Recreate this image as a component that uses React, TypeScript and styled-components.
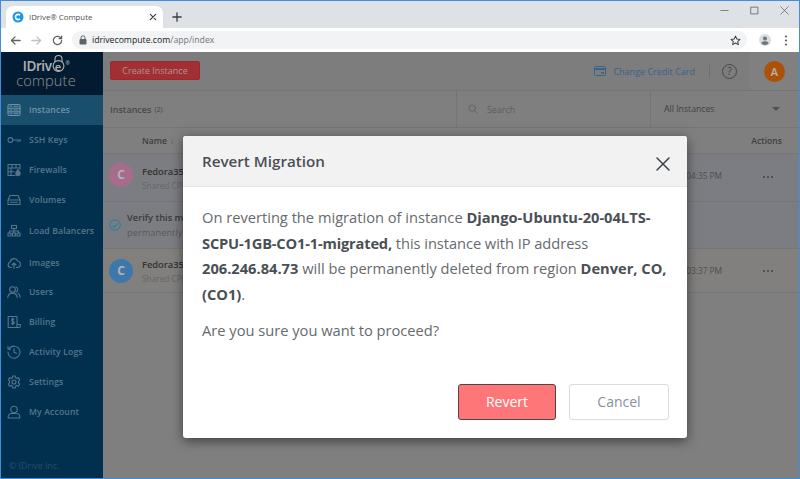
import React from "react";
import styled, { createGlobalStyle } from "styled-components";

const Global = createGlobalStyle`
  html, body { margin: 0; padding: 0; height: 100%; overflow: hidden; }
  #root { height: 100%; }
  * { box-sizing: border-box; }
  body { font-family: "Open Sans", "Noto Sans", sans-serif; }
`;

const Window = styled.div`
  position: relative;
  width: 800px;
  height: 479px;
  display: flex;
  flex-direction: column;
  border: 1px solid #3f8fdb;
  background: #fff;
  overflow: hidden;
`;

const TabStrip = styled.div`
  height: 27px;
  flex: none;
  background: #dee1e6;
  display: flex;
  align-items: flex-end;
  padding-left: 5px;
`;

const Tab = styled.div`
  width: 157px;
  height: 22px;
  background: #fff;
  border-radius: 7px 7px 0 0;
  display: flex;
  align-items: center;
  padding: 0 6px 0 6px;
  gap: 5px;
`;

const TabTitle = styled.span`
  flex: 1;
  font: 400 7.8px "Open Sans", sans-serif;
  color: #4a4d51;
`;

const NewTab = styled.div`
  width: 18px;
  height: 18px;
  margin: 0 0 2px 5px;
  display: flex;
  align-items: center;
  justify-content: center;
`;

const WindowControls = styled.div`
  margin-left: auto;
  height: 100%;
  display: flex;
  align-items: center;
  gap: 21px;
  padding: 0 10px 8px 0;
`;

const Toolbar = styled.div`
  height: 24px;
  flex: none;
  background: #fff;
  display: flex;
  align-items: center;
  padding: 0 11px 0 9px;
`;

const NavIcons = styled.div`
  display: flex;
  align-items: center;
  gap: 10px;
  width: 62px;
`;

const UrlBar = styled.div`
  flex: 1 1 auto;
  height: 18px;
  background: #f1f3f4;
  border-radius: 9px;
  display: flex;
  align-items: center;
  padding: 0 6px 0 7px;
  gap: 5px;
  font: 400 8.7px "Open Sans", sans-serif;
  color: #202124;
`;

const UrlPath = styled.span`
  color: #70757a;
`;

const UrlStar = styled.span`
  margin-left: auto;
  display: flex;
`;

const ToolRight = styled.div`
  display: flex;
  align-items: center;
  gap: 13px;
  padding-left: 12px;
`;

const AppArea = styled.div`
  flex: 1;
  display: flex;
  min-height: 0;
`;

const Sidebar = styled.aside`
  width: 102px;
  flex: none;
  background: #024571;
  display: flex;
  flex-direction: column;
`;

const LogoBox = styled.div`
  height: 43px;
  flex: none;
  background: #032845;
  display: flex;
  flex-direction: column;
  align-items: center;
  color: #ffffff;
  padding: 7px 12px 0 0;
`;

const LogoTop = styled.div`
  display: flex;
  align-items: flex-start;
  font: 600 13.5px/15px "Open Sans", sans-serif;
  letter-spacing: -0.4px;
`;

const LogoReg = styled.span`
  font-size: 5px;
  line-height: 8px;
  margin-left: 1px;
`;

const LogoLock = styled.span`
  position: relative;
  display: inline-block;
  width: 13px;
  text-align: center;
  font-size: 11px;
  letter-spacing: 0;
`;

const LockArc = styled.svg`
  position: absolute;
  left: 0;
  top: -5px;
`;

const LogoBottom = styled.div`
  font: 300 14.5px/14px "Open Sans", sans-serif;
  letter-spacing: 0.2px;
  color: #c8d0d6;
`;

const Nav = styled.nav`
  display: flex;
  flex-direction: column;
  flex: 1;
`;

const NavItem = styled.div<{ $active?: boolean; $shift?: number }>`
  height: 30px;
  flex: none;
  margin-top: ${(p) => p.$shift ?? 0}px;
  display: flex;
  align-items: center;
  gap: 8px;
  padding-left: 6px;
  background: ${(p) => (p.$active ? "#25719d" : "transparent")};
  color: ${(p) => (p.$active ? "#9cd0ee" : "#79a8c8")};
  font: 600 8.7px "Open Sans", sans-serif;
  letter-spacing: 0.1px;
  white-space: nowrap;
`;

const NavGlyph = styled.svg`
  width: 14px;
  height: 14px;
  flex: none;
  fill: none;
  stroke: currentColor;
  stroke-width: 1.1;
  stroke-linecap: round;
  stroke-linejoin: round;
`;

const Copyright = styled.div`
  margin-top: auto;
  padding: 0 0 6px 8px;
  color: #3a6f98;
  font: 400 8.8px "Open Sans", sans-serif;
`;

const Main = styled.main`
  flex: 1;
  min-width: 0;
  display: flex;
  flex-direction: column;
  background: #b7b7b7;
`;

const TopBar = styled.div`
  height: 39px;
  flex: none;
  display: flex;
  align-items: center;
  padding-left: 7px;
  background: #b3b3b3;
  border-bottom: 1px solid #a8a8a8;
`;

const CreateButton = styled.div`
  width: 90px;
  height: 19px;
  margin-bottom: 1px;
  background: #e84449;
  border: 1px solid #dc3d42;
  border-radius: 2px;
  color: #ffcfcf;
  font: 400 9px/17px "Open Sans", sans-serif;
  text-align: center;
`;

const CardLink = styled.div`
  margin-left: auto;
  display: flex;
  align-items: center;
  gap: 7px;
  color: #4f8fc8;
  font: 400 9px "Open Sans", sans-serif;
`;

const Divider = styled.div`
  width: 1px;
  height: 13px;
  margin: 0 12px 0 14px;
  background: #a0a0a0;
`;

const HelpIcon = styled.div`
  width: 15px;
  height: 15px;
  margin-right: 13px;
  border: 1px solid #656565;
  border-radius: 50%;
  color: #656565;
  font: 400 10.5px/13px "Open Sans", sans-serif;
  text-align: center;
`;

const AvatarBox = styled.div`
  width: 49px;
  height: 100%;
  display: flex;
  align-items: center;
  justify-content: center;
  background: #b8b8b8;
`;

const Avatar = styled.div`
  width: 21px;
  height: 21px;
  border-radius: 50%;
  background: #f7750b;
  color: #fff;
  font: 600 11px/21px "Open Sans", sans-serif;
  text-align: center;
`;

const FilterBar = styled.div`
  height: 37px;
  flex: none;
  display: flex;
  align-items: stretch;
  border-bottom: 1px solid #a8a8a8;
`;

const FilterTitle = styled.div`
  width: 353px;
  padding-left: 7px;
  display: flex;
  align-items: center;
  gap: 3px;
  color: #676767;
  font: 600 9px "Open Sans", sans-serif;
`;

const FilterCount = styled.span`
  font-weight: 400;
  font-size: 7px;
`;

const SearchBox = styled.div`
  width: 195px;
  display: flex;
  align-items: center;
  gap: 9px;
  padding-left: 11px;
  border-left: 1px solid #a8a8a8;
  border-right: 1px solid #a8a8a8;
  color: #868686;
  font: 400 8.9px "Open Sans", sans-serif;
`;

const Select = styled.div`
  flex: 1;
  display: flex;
  align-items: center;
  justify-content: space-between;
  padding: 0 19px 0 13px;
  color: #5c5c5c;
  font: 400 8.7px "Open Sans", sans-serif;
`;

const Caret = styled.span`
  width: 0;
  height: 0;
  border: 4px solid transparent;
  border-top: 4px solid #717171;
  border-bottom: 0;
`;

const TableHead = styled.div`
  height: 26px;
  flex: none;
  display: flex;
  align-items: center;
  justify-content: space-between;
  padding: 0 17px 0 39px;
  border-bottom: 1px solid #a8a8a8;
  color: #5a5a5a;
  font: 600 8.6px "Open Sans", sans-serif;
`;

const SortMark = styled.span`
  font-weight: 400;
  color: #868686;
  margin-left: 3px;
`;

const Row = styled.div<{ $h: number; $tint?: boolean }>`
  height: ${(p) => p.$h}px;
  flex: none;
  display: flex;
  align-items: center;
  padding: 0 25px 0 6px;
  background: ${(p) => (p.$tint ? "#b1b4ba" : "#b9b8b6")};
  border-bottom: 1px solid #a8a8a8;
`;

const RowAvatar = styled.div<{ $color: string; $lift?: boolean }>`
  width: 24px;
  height: 24px;
  flex: none;
  margin-bottom: ${(p) => (p.$lift ? 6 : 0)}px;
  border-radius: 50%;
  background: ${(p) => p.$color};
  color: #fff;
  font: 700 12px/24px "Open Sans", sans-serif;
  text-align: center;
`;

const RowText = styled.div`
  margin-left: 9px;
  padding-top: 1px;
  flex: 1;
  min-width: 0;
  white-space: nowrap;
`;

const RowName = styled.div`
  color: #494949;
  font: 600 9.3px/14px "Open Sans", sans-serif;
`;

const RowSub = styled.div`
  color: #929292;
  font: 400 8.3px/13px "Open Sans", sans-serif;
`;

const RowTime = styled.div<{ $lift?: boolean }>`
  color: #717171;
  font: 400 8.3px "Open Sans", sans-serif;
  margin-right: 41px;
  margin-bottom: ${(p) => (p.$lift ? 4 : 0)}px;
  white-space: nowrap;
`;

const RowDots = styled.div<{ $lift?: boolean }>`
  display: flex;
  gap: 2px;
  width: 11px;
  margin-bottom: ${(p) => (p.$lift ? 2 : 0)}px;
`;

const Dot = styled.i`
  width: 2px;
  height: 2px;
  flex: none;
  border-radius: 50%;
  background: #616161;
`;

const NoticeIcon = styled.svg`
  flex: none;
  fill: none;
  stroke: #3cb4e9;
  stroke-width: 1.2;
`;

const NoticeText = styled.div`
  margin-left: 6px;
  white-space: nowrap;
  color: #818181;
  font: 400 9.3px/15px "Open Sans", sans-serif;
`;

const NoticeStrong = styled.div`
  font-weight: 600;
  color: #535353;
`;

const Overlay = styled.div`
  position: absolute;
  left: 0;
  right: 0;
  top: 51px;
  bottom: 0;
  background: rgba(0, 0, 0, 0.3);
`;

const Modal = styled.div`
  position: absolute;
  left: 182px;
  top: 135px;
  width: 504px;
  height: 302px;
  display: flex;
  flex-direction: column;
  background: #fff;
  border-radius: 3px;
  box-shadow: 0 3px 12px rgba(0, 0, 0, 0.5);
  overflow: hidden;
`;

const ModalHeader = styled.div`
  height: 51px;
  flex: none;
  display: flex;
  align-items: center;
  justify-content: space-between;
  padding: 0 16px 0 19px;
  background: #f2f2f2;
  border-bottom: 1px solid #e8e8e8;
`;

const ModalTitle = styled.h2`
  margin: 0;
  color: #4a4f55;
  font: 600 15.2px "Open Sans", sans-serif;
`;

const CloseIcon = styled.span`
  display: flex;
  margin-top: 6px;
`;

const ModalBody = styled.div`
  flex: 1;
  padding: 18px 18px 0 19px;
  color: #666a6e;
  font: 400 14.67px/25.7px "Open Sans", sans-serif;
`;

const Paragraph = styled.p`
  margin: 0 0 10px;
`;

const Strong = styled.b`
  color: #4a4f55;
  font-weight: 700;
`;

const TightStrong = styled(Strong)`
  letter-spacing: -0.18px;
`;

const TightText = styled.span`
  letter-spacing: -0.05px;
`;

const ModalFooter = styled.div`
  display: flex;
  justify-content: flex-end;
  gap: 13px;
  padding: 0 18px 18px 0;
`;

const ModalButton = styled.div<{ $primary?: boolean }>`
  width: ${(p) => (p.$primary ? 98 : 100)}px;
  height: 36px;
  border-radius: 3px;
  border: 1px solid ${(p) => (p.$primary ? "#4d4646" : "#dcdcdc")};
  background: ${(p) => (p.$primary ? "#ff7678" : "#fff")};
  color: ${(p) => (p.$primary ? "#fff" : "#87929d")};
  font: 400 14px/34px "Open Sans", sans-serif;
  text-align: center;
`;

const Ic = ({ children, w = 12, h = 12, c = "#5f6368", sw = 1.4 }: { children: React.ReactNode; w?: number; h?: number; c?: string; sw?: number }) => (
  <svg width={w} height={h} viewBox="0 0 12 12" fill="none" stroke={c} strokeWidth={sw} strokeLinecap="round" strokeLinejoin="round">
    {children}
  </svg>
);

const navItems: { label: string; shift?: number; active?: boolean; icon: React.ReactNode }[] = [
  { label: "Instances", active: true, icon: <><rect x="1" y="1.5" width="12" height="11" rx="1.5" /><path d="M1 5.2h12M1 8.9h12M3 3.3h2M3 7h2M3 10.7h2M7 3.3h4M7 7h4M7 10.7h4" /></> },
  { label: "SSH Keys", icon: <><circle cx="3.4" cy="7" r="2.4" /><path d="M5.8 7h8M11 7v1.6M13 7v1.2" /></> },
  { label: "Firewalls", icon: <><path d="M8 12.5H1V1.5h12v4.5M1 5h12M1 8.7h6M5 1.5V5M9 1.5V5M4 5v3.7M4 8.7v3.8" /><path d="M11 6.5c1.3 1.8 2.2 2.8 2.2 4a2.2 2.2 0 0 1-4.4 0c0-1.2.9-2.2 2.2-4z" fill="currentColor" /></> },
  { label: "Volumes", icon: <><path d="M1 7l2-4.5h8L13 7v4.5H1zM1 7h12M3.5 9.2h7" /></> },
  { label: "Load Balancers", shift: 1, icon: <><rect x="4.5" y="1.5" width="5" height="3" /><path d="M7 4.5v2.5M2.5 9V7h9v2M7 7v2" /><rect x="1" y="9" width="3" height="3" /><rect x="5.5" y="9" width="3" height="3" /><rect x="10" y="9" width="3" height="3" /></> },
  { label: "Images", shift: 2, icon: <><path d="M4.5 11.5H3.6a2.8 2.8 0 0 1-.3-5.5A3.8 3.8 0 0 1 10.6 5a3.3 3.3 0 0 1 .2 6.5h-1.3" /><path d="M7 12.5V7M5 9l2-2 2 2" /></> },
  { label: "Users", shift: -1, icon: <><circle cx="5.5" cy="4.5" r="2.8" /><path d="M.8 12.5c.3-3 2.2-4.4 4.7-4.4s4.4 1.4 4.7 4.4M9 1.9a2.8 2.8 0 0 1 0 5.2M11 8.3c1.3.7 2 2.1 2.2 4" /></> },
  { label: "Billing", icon: <><path d="M10 10.5V1.5H1.2v11H12a1.4 1.4 0 0 0 1.4-1.4v-1.6H10v1.6a1.4 1.4 0 0 1-1.4 1.4" /><path d="M7 4.2C6.3 3.6 4.6 3.7 4.6 5S7.3 6 7.3 7.4 5.3 8.9 4.4 8.2M5.8 3v6.8" /></> },
  { label: "Activity Logs", icon: <><path d="M2.5 3.2A6 6 0 1 1 1 7M1 1.6v2.5h2.5M7 3.8V7.3l2.6 1" /></> },
  { label: "Settings", icon: <><circle cx="7" cy="7" r="2" /><path d="M5.8 1h2.4l.4 1.7 1.3.7 1.7-.5 1.1 2-1.2 1.3v1.6l1.2 1.3-1.1 2-1.7-.5-1.3.7-.4 1.7H5.8l-.4-1.7-1.3-.7-1.7.5-1.1-2 1.2-1.3V6.2L1.3 4.9l1.1-2 1.7.5 1.3-.7z" /></> },
  { label: "My Account", icon: <><circle cx="7" cy="4.5" r="3.2" /><path d="M1.2 13v-1.2c0-1.8 1.6-3.3 3.4-3.3h4.8c1.8 0 3.4 1.5 3.4 3.3V13z" /></> },
];

export default function App() {
  return (
    <Window>
      <Global />
      <TabStrip>
        <Tab>
          <svg width="12" height="12" viewBox="0 0 12 12">
            <circle cx="6" cy="6" r="5.5" fill="#1a96e8" />
            <path d="M8 4.3A2.6 2.6 0 1 0 8 7.7" fill="none" stroke="#fff" strokeWidth="1.6" />
          </svg>
          <TabTitle>IDrive® Compute</TabTitle>
          <Ic w={8} h={8} c="#3c4043" sw={1.8}><path d="M2 2l8 8M10 2l-8 8" /></Ic>
        </Tab>
        <NewTab>
          <Ic w={10} h={10} c="#3c4043" sw={1.6}><path d="M6 1v10M1 6h10" /></Ic>
        </NewTab>
        <WindowControls>
          <Ic w={9} h={9} c="#555" sw={0.9}><path d="M1 6h10" /></Ic>
          <Ic w={9} h={9} c="#555" sw={1}><rect x="1.5" y="1.5" width="9" height="9" /></Ic>
          <Ic w={9} h={9} c="#555" sw={0.9}><path d="M1 1l10 10M11 1L1 11" /></Ic>
        </WindowControls>
      </TabStrip>
      <Toolbar>
        <NavIcons>
          <Ic w={11} h={11} c="#5f6368"><path d="M11 6H1.5M5.5 2L1.5 6l4 4" /></Ic>
          <Ic w={11} h={11} c="#bcc0c5"><path d="M1 6h9.5M6.5 2l4 4-4 4" /></Ic>
          <Ic w={11} h={11} c="#5f6368"><path d="M10.5 6a4.5 4.5 0 1 1-1.3-3.2L10.5 4V1.2M10.5 4H7.8" /></Ic>
        </NavIcons>
        <UrlBar>
          <svg width="8" height="10" viewBox="0 0 8 10">
            <rect x="0.5" y="4" width="7" height="5.5" rx="1" fill="#5f6368" />
            <path d="M2 4V2.8a2 2 0 0 1 4 0V4" fill="none" stroke="#5f6368" />
          </svg>
          <span>idrivecompute.com<UrlPath>/app/index</UrlPath></span>
          <UrlStar>
            <Ic w={11} h={11} c="#3c4043" sw={1.1}><path d="M6 1.2l1.5 3.2 3.4.4-2.5 2.3.7 3.4-3.1-1.7-3.1 1.7.7-3.4L1.1 4.8l3.4-.4z" /></Ic>
          </UrlStar>
        </UrlBar>
        <ToolRight>
          <svg width="12" height="12" viewBox="0 0 12 12">
            <circle cx="6" cy="6" r="6" fill="#dadce0" />
            <circle cx="6" cy="4.4" r="2" fill="#70757a" />
            <path d="M2.2 9.2C3 7.6 4.4 7.2 6 7.2s3 .4 3.8 2a5 5 0 0 1-7.6 0z" fill="#70757a" />
          </svg>
          <svg width="4" height="11" viewBox="0 0 4 11">
            <circle cx="2" cy="1.5" r="1.1" fill="#5f6368" />
            <circle cx="2" cy="5.5" r="1.1" fill="#5f6368" />
            <circle cx="2" cy="9.5" r="1.1" fill="#5f6368" />
          </svg>
        </ToolRight>
      </Toolbar>
      <AppArea>
        <Sidebar>
          <LogoBox>
            <LogoTop>
              IDriv
              <LogoLock>
                e
                <LockArc width="13" height="18" viewBox="0 0 13 18">
                  <circle cx="6.5" cy="12" r="5.4" fill="none" stroke="#fff" strokeWidth="1.1" />
                  <path d="M3 8V5a3.5 3.5 0 0 1 7 0v3" fill="none" stroke="#fff" strokeWidth="1.1" />
                </LockArc>
              </LogoLock>
              <LogoReg>®</LogoReg>
            </LogoTop>
            <LogoBottom>compute</LogoBottom>
          </LogoBox>
          <Nav>
            {navItems.map((n) => (
              <NavItem key={n.label} $active={n.active} $shift={n.shift}>
                <NavGlyph viewBox="0 0 14 14">{n.icon}</NavGlyph>
                {n.label}
              </NavItem>
            ))}
            <Copyright>© IDrive Inc.</Copyright>
          </Nav>
        </Sidebar>
        <Main>
          <TopBar>
            <CreateButton>Create Instance</CreateButton>
            <CardLink>
              <svg width="12" height="10" viewBox="0 0 12 10">
                <rect x="0.5" y="0.5" width="11" height="9" rx="1" fill="none" stroke="#4f8fc8" />
                <rect x="0.5" y="2" width="11" height="2" fill="#4f8fc8" />
                <rect x="7" y="6" width="3" height="1.5" fill="#4f8fc8" />
              </svg>
              Change Credit Card
            </CardLink>
            <Divider />
            <HelpIcon>?</HelpIcon>
            <AvatarBox><Avatar>A</Avatar></AvatarBox>
          </TopBar>
          <FilterBar>
            <FilterTitle>Instances <FilterCount>(2)</FilterCount></FilterTitle>
            <SearchBox>
              <Ic w={10} h={10} c="#868686" sw={1}><circle cx="5" cy="5" r="3.8" /><path d="M8 8l3 3" /></Ic>
              Search
            </SearchBox>
            <Select>All Instances<Caret /></Select>
          </FilterBar>
          <TableHead>
            <span>Name<SortMark>↓</SortMark></span>
            <span>Actions</span>
          </TableHead>
          <Row $h={48} $tint>
            <RowAvatar $color="#f09ac8" $lift>C</RowAvatar>
            <RowText>
              <RowName>Fedora35-Server</RowName>
              <RowSub>Shared CPU</RowSub>
            </RowText>
            <RowTime $lift>Jan 31, 2022 04:35 PM</RowTime>
            <RowDots $lift><Dot /><Dot /><Dot /></RowDots>
          </Row>
          <Row $h={47} $tint>
            <NoticeIcon width="12" height="12" viewBox="0 0 13 13">
              <circle cx="6.5" cy="6.5" r="5.6" />
              <path d="M3.8 6.8l2 2 3.6-3.8" />
            </NoticeIcon>
            <NoticeText>
              <NoticeStrong>Verify this migrated instance</NoticeStrong>
              permanently.
            </NoticeText>
          </Row>
          <Row $h={44}>
            <RowAvatar $color="#58abf6">C</RowAvatar>
            <RowText>
              <RowName>Fedora35-Server</RowName>
              <RowSub>Shared CPU</RowSub>
            </RowText>
            <RowTime>Jan 31, 2022 03:37 PM</RowTime>
            <RowDots><Dot /><Dot /><Dot /></RowDots>
          </Row>
        </Main>
      </AppArea>
      <Overlay />
      <Modal>
        <ModalHeader>
          <ModalTitle>Revert Migration</ModalTitle>
          <CloseIcon>
            <Ic w={16} h={16} c="#3c4148" sw={1.1}><path d="M1.5 1.5l9 9M10.5 1.5l-9 9" /></Ic>
          </CloseIcon>
        </ModalHeader>
        <ModalBody>
          <Paragraph>
            On reverting the migration of instance <Strong>Django-Ubuntu-20-04LTS-</Strong><TightStrong>SCPU-1GB-CO1-1-migrated,</TightStrong> <TightText>this instance with IP address</TightText> <Strong>206.246.84.73</Strong> will be permanently deleted from region <Strong>Denver, CO, (CO1)</Strong>.
          </Paragraph>
          <Paragraph>Are you sure you want to proceed?</Paragraph>
        </ModalBody>
        <ModalFooter>
          <ModalButton $primary>Revert</ModalButton>
          <ModalButton>Cancel</ModalButton>
        </ModalFooter>
      </Modal>
    </Window>
  );
}
